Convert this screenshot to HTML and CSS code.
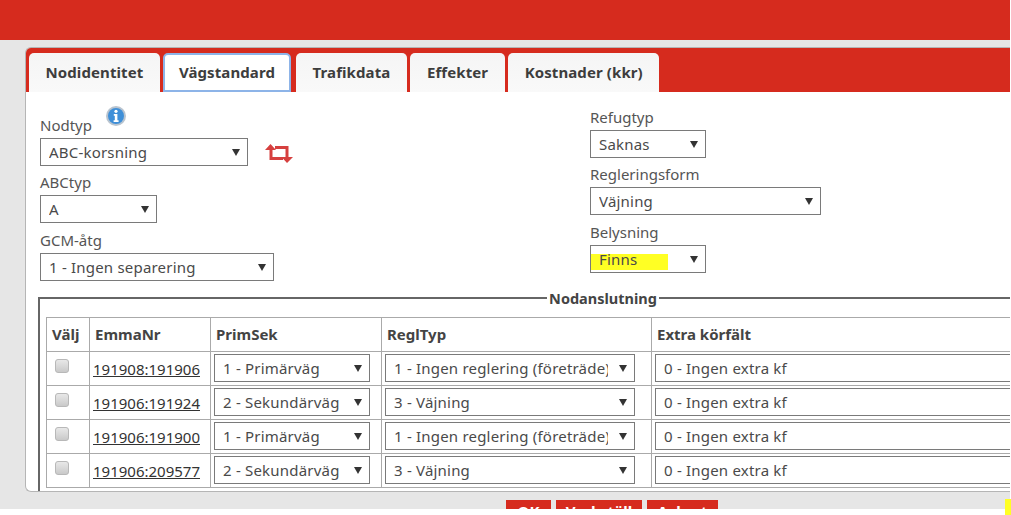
FILE: index.html
```html
<!DOCTYPE html>
<html lang="sv">
<head>
<meta charset="utf-8">
<title>Vägstandard</title>
<link rel="stylesheet" href="styles.css">
</head>
<body>
<div class="page">
  <header class="topbar"></header>
  <main class="card">
    <nav class="tabs">
      <a class="tab">Nodidentitet</a>
      <a class="tab active">Vägstandard</a>
      <a class="tab">Trafikdata</a>
      <a class="tab">Effekter</a>
      <a class="tab">Kostnader (kkr)</a>
    </nav>
    <div class="form">
      <div class="col col-left">
        <div class="group">
          <label class="label">Nodtyp<svg class="info" width="22" height="22" viewBox="0 0 22 22"><circle cx="11" cy="11" r="10" fill="#b9c4cf"/><circle cx="11" cy="11" r="8" fill="#3f8fd8"/><circle cx="11" cy="6.300" r="1.600" fill="#fff"/><path d="M8.800 9h3.600v6.200h1.200V17H8.600v-1.800h1.200v-4.400h-1z" fill="#fff"/></svg></label>
          <div class="select-row">
            <div class="sel w208"><select><option>ABC-korsning</option></select></div>
            <svg class="swap" width="28" height="19" viewBox="0 0 28 19"><path d="M5.500 0L11 6H7.500v7H18v3H4.500V6H0z M22 19l-5.500-6h4V5H10V2h13.500v11H28z" fill="#d6403f"/></svg>
          </div>
        </div>
        <div class="group">
          <label class="label">ABCtyp</label>
          <div class="sel w117"><select><option>A</option></select></div>
        </div>
        <div class="group">
          <label class="label">GCM-åtg</label>
          <div class="sel w234"><select><option>1 - Ingen separering</option></select></div>
        </div>
      </div>
      <div class="col">
        <div class="group">
          <label class="label">Refugtyp</label>
          <div class="sel w116"><select><option>Saknas</option></select></div>
        </div>
        <div class="group">
          <label class="label">Regleringsform</label>
          <div class="sel w231"><select><option>Väjning</option></select></div>
        </div>
        <div class="group">
          <label class="label">Belysning</label>
          <div class="sel w116"><span class="marker"></span><select><option>Finns</option></select></div>
        </div>
      </div>
    </div>
    <fieldset class="nodes">
      <legend>Nodanslutning</legend>
      <table>
        <colgroup><col class="c1"><col class="c2"><col class="c3"><col class="c4"><col class="c5"></colgroup>
        <thead><tr><th>Välj</th><th>EmmaNr</th><th>PrimSek</th><th>ReglTyp</th><th>Extra körfält</th></tr></thead>
        <tbody>
          <tr><td><input class="check" type="checkbox"></td><td><a class="link">191908:191906</a></td><td><div class="sel w156"><select><option>1 - Primärväg</option></select></div></td><td><div class="sel w250"><select><option>1 - Ingen reglering (företräde)</option></select></div></td><td><div class="sel w500"><select><option>0 - Ingen extra kf</option></select></div></td></tr>
          <tr><td><input class="check" type="checkbox"></td><td><a class="link">191906:191924</a></td><td><div class="sel w156"><select><option>2 - Sekundärväg</option></select></div></td><td><div class="sel w250"><select><option>3 - Väjning</option></select></div></td><td><div class="sel w500"><select><option>0 - Ingen extra kf</option></select></div></td></tr>
          <tr><td><input class="check" type="checkbox"></td><td><a class="link">191906:191900</a></td><td><div class="sel w156"><select><option>1 - Primärväg</option></select></div></td><td><div class="sel w250"><select><option>1 - Ingen reglering (företräde)</option></select></div></td><td><div class="sel w500"><select><option>0 - Ingen extra kf</option></select></div></td></tr>
          <tr><td><input class="check" type="checkbox"></td><td><a class="link">191906:209577</a></td><td><div class="sel w156"><select><option>2 - Sekundärväg</option></select></div></td><td><div class="sel w250"><select><option>3 - Väjning</option></select></div></td><td><div class="sel w500"><select><option>0 - Ingen extra kf</option></select></div></td></tr>
        </tbody>
      </table>
    </fieldset>
  </main>
  <footer class="actions">
    <button class="btn b-ok">OK</button>
    <button class="btn b-apply">Verkställ</button>
    <button class="btn b-cancel">Avbryt</button>
  </footer>
</div>
<span class="corner"></span>
</body>
</html>
```
FILE: styles.css
```css
* { box-sizing: border-box; }
html, body { margin: 0; height: 515px; overflow: hidden; background: #fff; }
body { position: relative; font-family: "Noto Sans", Tahoma, sans-serif; font-size: 15px; color: #4a4a4a; }
.page { width: 1010px; height: 509px; overflow: hidden; background: #e6e6e6; display: flex; flex-direction: column; }
.topbar { height: 40px; background: #d62b1e; flex: none; }
.card { flex: none; margin: 7px 0 0 25px; height: 445px; background: #fff; border: 1px solid #b5b5b5; border-right: 0; border-radius: 6px 0 0 6px; overflow: hidden; }
.tabs { display: flex; gap: 3.5px; height: 44px; background: #d62b1e; padding: 5px 0 0 3px; }
.tab { height: 39px; line-height: 38px; padding: 0 16.5px; letter-spacing: .1px; font-weight: 700; color: #3d3d3d; background: linear-gradient(#f5f5f5, #f9f9f9); border-radius: 5px 5px 0 0; }
.tab.active { background: #fff; border: 2px solid #8db4e8; line-height: 34px; padding: 0 13.5px; margin-right: 2px; }
.form { display: flex; padding: 9px 0 0 14px; height: 196px; }
.col { flex: none; width: 550px; }
.col-left { padding-top: 8px; }
.group { height: 57px; }
.group:last-child { margin-top: 1px; }
.label { display: block; height: 29px; line-height: 33px; position: relative; color: #555; }
.info { position: absolute; left: 65px; top: -4px; }
.select-row { display: flex; align-items: center; gap: 17px; }
.swap { flex: none; margin-top: 2px; }
.sel { position: relative; height: 28px; flex: none; }
.sel::after { content: ""; position: absolute; right: 8px; top: 11px; border-left: 4px solid transparent; border-right: 4px solid transparent; border-top: 7px solid #333; pointer-events: none; }
.sel select { position: relative; display: block; width: 100%; height: 100%; appearance: none; -webkit-appearance: none; border: 1px solid #7a7a7a; border-radius: 0; background: transparent; font: inherit; line-height: normal; letter-spacing: .2px; color: #4a4a4a; padding: 0 26px 0 8px; }
.marker { position: absolute; left: 0; top: 9px; width: 78px; height: 16px; background: #ffff24; }
.w117 { width: 117px; } .w116 { width: 116px; } .w208 { width: 208px; } .w231 { width: 231px; } .w234 { width: 234px; }
.w156 { width: 156px; } .w250 { width: 250px; } .w500 { width: 500px; }
.nodes { margin: 0 0 0 12px; width: 1130px; min-width: 1130px; padding: 6px 6px; border: 2px solid #666; }
.nodes legend { margin: 0 auto; padding: 0 2px; font-weight: 700; color: #444; font-size: 14.5px; }
table { border-collapse: collapse; table-layout: fixed; width: 978px; margin-top: 3px; }
.c1 { width: 43px; } .c2 { width: 121px; } .c3 { width: 171px; } .c4 { width: 270px; } .c5 { width: 373px; }
th, td { border: 1px solid #aaa; text-align: left; overflow: visible; }
td { height: 34px; padding: 2px 3px 0; vertical-align: top; line-height: 30px; }
th { height: 34px; padding: 0 4px 2px 5px; color: #444; font-weight: 700; }
.link { color: #333; text-decoration: underline; }
.check { appearance: none; -webkit-appearance: none; display: block; width: 14px; height: 14px; margin: 5px 0 0 5px; border: 1px solid #b8b8b8; border-radius: 3px; background: linear-gradient(#e8e8e8, #c9c9c9); }
.actions { flex: none; display: flex; gap: 5px; margin-top: 8px; padding-left: 506px; height: 22px; }
.btn { height: 22px; border: 0; padding: 0; background: #d62b1e; color: #fff; font: 700 15px "Noto Sans", sans-serif; text-align: center; }
.b-ok { width: 45px; } .b-apply { width: 86px; } .b-cancel { width: 71px; }
.corner { position: absolute; left: 1005px; top: 499px; width: 6px; height: 16px; background: #ffff24; }
```
